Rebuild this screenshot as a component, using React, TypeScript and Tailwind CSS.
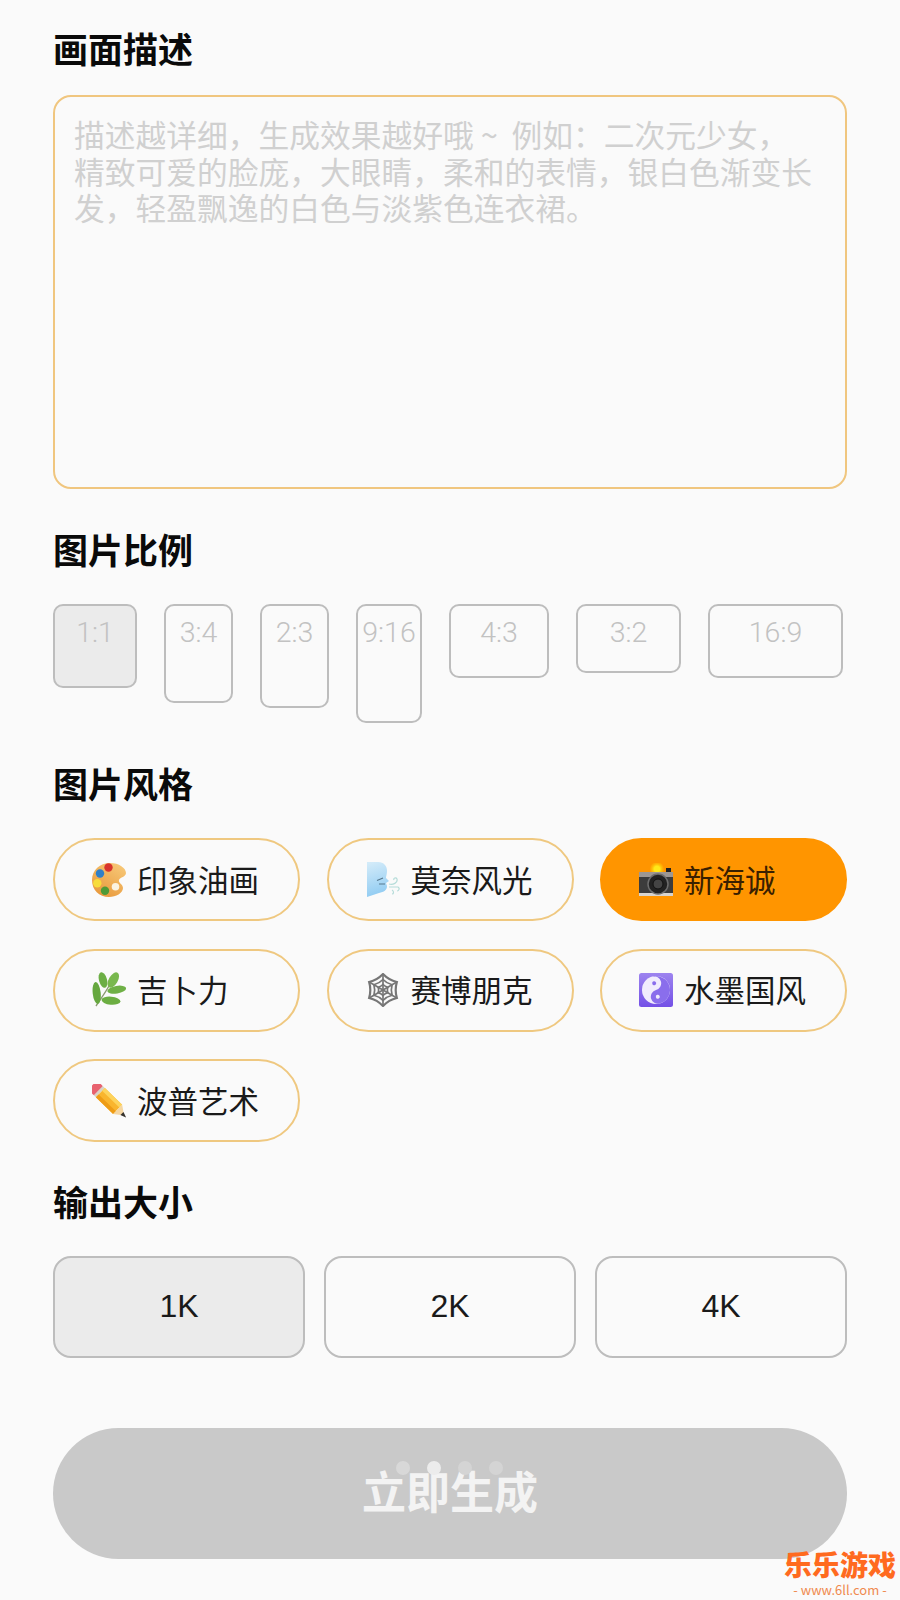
import React, { useState } from "react";

const Palette = () => (
  <svg width="34" height="36" viewBox="0 0 34 36">
    <defs>
      <linearGradient id="pal" x1="0.8" y1="0" x2="0.2" y2="1">
        <stop offset="0" stopColor="#f7c877" />
        <stop offset="1" stopColor="#e8973a" />
      </linearGradient>
    </defs>
    <path d="M18 1C27 1 34 6 34 11C34 15 28 15 27 18C26 21 31 22 31 26C31 31 24 35 17 35C7 35 0 28 0 18C0 8 8 1 18 1Z" fill="url(#pal)" />
    <circle cx="16.5" cy="5.5" r="4.200" fill="#d8342c" />
    <circle cx="8" cy="11.5" r="4.200" fill="#2f7fc8" />
    <circle cx="5.3" cy="21.3" r="4.200" fill="#f7dc3a" />
    <circle cx="13" cy="28.7" r="4.200" fill="#4f9a36" />
    <circle cx="23.5" cy="24.7" r="3.800" fill="#fbf3e2" />
  </svg>
);

const WindFace = () => (
  <svg width="34" height="36" viewBox="0 0 34 36">
    <defs>
      <linearGradient id="wind" x1="0.2" y1="0" x2="0.4" y2="1">
        <stop offset="0" stopColor="#d3ebf9" />
        <stop offset="1" stopColor="#8fcbf2" />
      </linearGradient>
    </defs>
    <path d="M1 0H12C18 0 21 4 21 9C21 12 20 14 20 16L23 19L20 21L21 24C21 28 18 30 13 31L1 35Z" fill="url(#wind)" />
    <path d="M11 18.500L17 16M13 22H19" stroke="#56788e" strokeWidth="1.200" fill="none" />
    <path d="M23 22C27 23 32 21 31 17C30 15 27 16 28 18M23 25H32C34 26 33 29 31 29M26 28C28 29 28 32 26 32" stroke="#b5dcd9" strokeWidth="1.200" fill="none" />
  </svg>
);

const FlashCamera = () => (
  <svg width="34" height="34" viewBox="0 0 34 34">
    <defs>
      <radialGradient id="flash">
        <stop offset="0.4" stopColor="#ffe81a" />
        <stop offset="1" stopColor="#ffc400" stopOpacity="0.2" />
      </radialGradient>
    </defs>
    <circle cx="18" cy="6" r="7" fill="url(#flash)" />
    <rect x="0" y="9" width="34" height="23" rx="1" fill="#3c3c3c" />
    <rect x="0" y="9" width="34" height="5" fill="#9d9793" />
    <rect x="27" y="5" width="5" height="4" fill="#222" />
    <rect x="0" y="30" width="34" height="3" fill="#d8d4cf" />
    <circle cx="19" cy="21" r="10" fill="#222" stroke="#6d6d6d" strokeWidth="1.500" />
    <circle cx="19" cy="21" r="5" fill="#444" stroke="#111" strokeWidth="1" />
  </svg>
);

const Herb = () => (
  <svg width="34" height="36" viewBox="0 0 34 36">
    <path d="M4 34C8 28 13 21 17 14" stroke="#8c9a72" strokeWidth="1.400" fill="none" />
    <ellipse cx="4.700" cy="21" rx="4" ry="11" transform="rotate(-6 4.700 21)" fill="#66a83f" />
    <ellipse cx="11" cy="8" rx="4" ry="8" transform="rotate(-15 11 8)" fill="#6cae45" />
    <ellipse cx="21.300" cy="8" rx="4.500" ry="8.500" transform="rotate(30 21.300 8)" fill="#79b84e" />
    <ellipse cx="24.700" cy="17.700" rx="9.500" ry="3.800" transform="rotate(-10 24.700 17.700)" fill="#6fb046" />
    <ellipse cx="19" cy="28.700" rx="9.500" ry="4" transform="rotate(5 19 28.700)" fill="#6cae42" />
  </svg>
);

const hexPoint = (r: number, i: number) => {
  const a = (Math.PI / 3) * i - Math.PI / 2;
  return [17 + r * Math.cos(a), 17 + r * Math.sin(a)];
};

const webRing = (r: number, sag: number) => {
  let d = "";
  for (let i = 0; i < 6; i++) {
    const [x1, y1] = hexPoint(r, i);
    const [x2, y2] = hexPoint(r, i + 1);
    const a = (Math.PI / 3) * (i + 0.5) - Math.PI / 2;
    const cr = r * sag;
    const cx = 17 + cr * Math.cos(a);
    const cy = 17 + cr * Math.sin(a);
    d += `${i === 0 ? `M${x1} ${y1}` : ""}Q${cx} ${cy} ${x2} ${y2}`;
  }
  return d + "Z";
};

const SpiderWeb = () => (
  <svg width="34" height="34" viewBox="0 0 34 34" fill="none" stroke="#767676" strokeWidth="1.700">
    <path d={webRing(16, 0.72)} strokeWidth="2.200" />
    <path d={webRing(10.500, 0.72)} />
    <path d={webRing(5.500, 0.72)} />
    {[0, 1, 2].map((i) => {
      const [x1, y1] = hexPoint(16, i);
      const [x2, y2] = hexPoint(16, i + 3);
      return <line key={i} x1={x1} y1={y1} x2={x2} y2={y2} />;
    })}
  </svg>
);

const YinYang = () => (
  <svg width="34" height="34" viewBox="0 0 34 34">
    <defs>
      <linearGradient id="yy" x1="0" y1="0" x2="0" y2="1">
        <stop offset="0" stopColor="#9d84ef" />
        <stop offset="1" stopColor="#7350e6" />
      </linearGradient>
    </defs>
    <rect width="34" height="34" rx="2.500" fill="url(#yy)" />
    <circle cx="17" cy="17" r="14" fill="#f1ecfd" />
    <g transform="rotate(-15 17 17)">
      <path d="M17 3A14 14 0 0 1 17 31A7 7 0 0 1 17 17A7 7 0 0 0 17 3Z" fill="#8a6eec" />
      <circle cx="17" cy="10" r="2" fill="#8a6eec" />
      <circle cx="17" cy="24" r="2" fill="#f1ecfd" />
    </g>
  </svg>
);

const Pencil = () => (
  <svg width="34" height="34" viewBox="0 0 34 34">
    <g transform="translate(17 17) rotate(44)">
      <rect x="-23" y="-6.500" width="9" height="13" rx="2" fill="#e8626f" />
      <rect x="-15" y="-6.500" width="3" height="13" fill="#d9d2c4" />
      <rect x="-12" y="-6.500" width="24" height="13" fill="#f9b52e" />
      <rect x="-12" y="-6.500" width="24" height="4" fill="#fdd35c" />
      <rect x="-12" y="2.500" width="24" height="4" fill="#ee9c16" />
      <path d="M12 -6.500L21 0L12 6.500Z" fill="#f5d6a2" />
      <path d="M18 -2.200L24 0L18 2.200Z" fill="#35322e" />
    </g>
  </svg>
);

const ratios = [
  { label: "1:1", w: "w-[84px]", h: "h-[84px]" },
  { label: "3:4", w: "w-[69px]", h: "h-[99px]" },
  { label: "2:3", w: "w-[69px]", h: "h-[104px]" },
  { label: "9:16", w: "w-[66px]", h: "h-[119px]" },
  { label: "4:3", w: "w-[100px]", h: "h-[74px]" },
  { label: "3:2", w: "w-[105px]", h: "h-[69px]" },
  { label: "16:9", w: "w-[135px]", h: "h-[74px]" },
];

const styles = [
  { label: "印象油画", icon: <Palette /> },
  { label: "莫奈风光", icon: <WindFace /> },
  { label: "新海诚", icon: <FlashCamera /> },
  { label: "吉卜力", icon: <Herb /> },
  { label: "赛博朋克", icon: <SpiderWeb /> },
  { label: "水墨国风", icon: <YinYang /> },
  { label: "波普艺术", icon: <Pencil /> },
];

const sizes = ["1K", "2K", "4K"];

const Heading = ({ className, children }: { className: string; children: React.ReactNode }) => (
  <h2 className={`text-[35px] font-bold leading-[46px] text-[#0a0a0a] ${className}`}>{children}</h2>
);

export default function App() {
  const [ratio, setRatio] = useState("1:1");
  const [style, setStyle] = useState("新海诚");
  const [size, setSize] = useState("1K");

  return (
    <div className="relative h-[1600px] w-[900px] overflow-hidden bg-[#fafafa] px-[53px] pt-[25px] font-['Noto_Sans_CJK_SC','Noto_Sans',sans-serif]">
      <Heading className="">画面描述</Heading>
      <div className="mt-[24px] h-[394px] rounded-[18px] border-2 border-[#f0c67f] pl-[19px] pt-[19px] text-[30.75px] leading-[36.5px] text-[#d0d0d0] whitespace-pre">
        描述越详细，生成效果越好哦 ~  例如：二次元少女，
        <br />
        精致可爱的脸庞，大眼睛，柔和的表情，银白色渐变长
        <br />
        发，轻盈飘逸的白色与淡紫色连衣裙。
      </div>

      <Heading className="mt-[37px]">图片比例</Heading>
      <div className="mt-[32px] flex h-[119px] items-start gap-[27px]">
        {ratios.map((r) => (
          <button
            key={r.label}
            onClick={() => setRatio(r.label)}
            className={`${r.w} ${r.h} flex shrink-0 items-start justify-center rounded-[10px] border-2 border-[#bdbdbd] pt-[8px] text-[28.5px] leading-[38px] text-[#c2c2c2] font-['Roboto',sans-serif] font-light ${
              ratio === r.label ? "bg-[#ebebeb]" : ""
            }`}
          >
            {r.label}
          </button>
        ))}
      </div>

      <Heading className="mt-[37px]">图片风格</Heading>
      <div className="mt-[32px] grid grid-cols-3 gap-x-[26.5px] gap-y-[27.5px]">
        {styles.map((s) => (
          <button
            key={s.label}
            onClick={() => setStyle(s.label)}
            className={`flex h-[83px] items-center gap-[11px] rounded-full border-2 pl-[37px] text-[30.5px] ${
              style === s.label ? "border-[#ff9500] bg-[#ff9500] text-[#3a2000]" : "border-[#efc880] text-[#1a1a1a]"
            }`}
          >
            <span className="flex h-[36px] w-[34px] shrink-0 items-center justify-center">{s.icon}</span>
            {s.label}
          </button>
        ))}
      </div>

      <Heading className="mt-[36px]">输出大小</Heading>
      <div className="mt-[32px] grid grid-cols-3 gap-[19px]">
        {sizes.map((s) => (
          <button
            key={s}
            onClick={() => setSize(s)}
            className={`h-[101.5px] rounded-[18px] border-2 border-[#bdbdbd] pb-[2px] text-[32px] font-['Liberation_Sans',sans-serif] text-[#1a1a1a] ${
              size === s ? "bg-[#ebebeb]" : ""
            }`}
          >
            {s}
          </button>
        ))}
      </div>

      <button className="relative mt-[70.5px] h-[131px] w-full rounded-full bg-[#c9c9c9] pb-[8px] text-[44px] font-bold text-[#f3f3f3]">
        立即生成
        <span className="absolute left-[343px] top-[33px] flex gap-[17px]">
          <span className="h-[14px] w-[14px] rounded-full bg-[#d8d8d8]" />
          <span className="h-[14px] w-[14px] rounded-full bg-[#ececec]" />
          <span className="h-[14px] w-[14px] rounded-full bg-[#d4d4d4]" />
          <span className="h-[14px] w-[14px] rounded-full bg-[#d4d4d4]" />
        </span>
      </button>

      <div className="absolute bottom-[2px] right-[3px] flex w-[114px] flex-col items-center text-[#ff6a1f]">
        <span className="mb-[3px] text-[28px] font-black leading-[30px] whitespace-nowrap">乐乐游戏</span>
        <span className="text-[13px] leading-[16px] text-[#f08a50] whitespace-nowrap">- www.6ll.com -</span>
      </div>
    </div>
  );
}
